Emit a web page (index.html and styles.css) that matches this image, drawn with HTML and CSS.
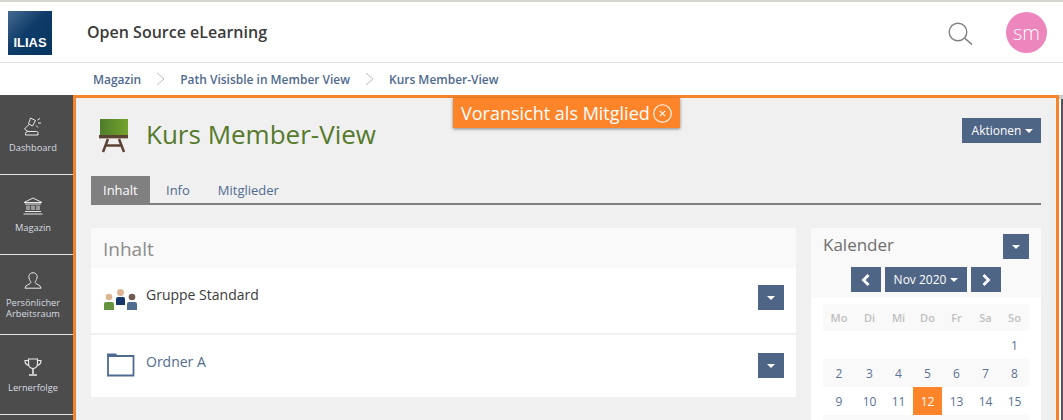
FILE: index.html
```html
<!DOCTYPE html>
<html lang="de">
<head>
<meta charset="utf-8">
<title>Kurs Member-View</title>
<link rel="stylesheet" href="styles.css">
</head>
<body>
<header class="topbar">
  <div class="logo"><span>ILIAS</span></div>
  <div class="site-title">Open Source eLearning</div>
  <svg class="search" width="25" height="23" viewBox="0 0 25 23" fill="none" stroke="#808080" stroke-width="1.4"><circle cx="10" cy="10" r="8.8"/><path d="M16.500 16 L24 22.500" stroke-width="1.600"/></svg>
  <div class="avatar">sm</div>
</header>
<nav class="crumbs">
  <a>Magazin</a>
  <svg class="crumb-sep" width="9" height="14" viewBox="0 0 9 14" fill="none" stroke="#bdbdbd"><path d="M1 1 L8 7 L1 13"/></svg>
  <a>Path Visisble in Member View</a>
  <svg class="crumb-sep" width="9" height="14" viewBox="0 0 9 14" fill="none" stroke="#bdbdbd"><path d="M1 1 L8 7 L1 13"/></svg>
  <a>Kurs Member-View</a>
</nav>
<div class="shell">
  <aside class="side">
    <div class="side-item">
      <svg width="20" height="19" viewBox="0 0 20 19" fill="none" stroke="#e8e8e8" stroke-width="1"><path d="M7.500 1 L12.500 3.500 L9.500 9 L5.500 7 Z"/><path d="M6 7.500 L1.500 12 L5 14.500"/><path d="M2.500 18 H15 V15.500 Q15 14.500 13.500 14.500 H5 Q2.500 14.500 2.500 16.500 Z"/><path d="M14.500 3 L17 1.500 M15 6 H18 M13 8.500 L15 10.500"/></svg>
      <span>Dashboard</span>
    </div>
    <div class="side-item">
      <svg width="20" height="18" viewBox="0 0 20 18" fill="none" stroke="#e8e8e8" stroke-width="1"><path d="M1 5.500 L10 1 L19 5.500 Z"/><path d="M2 7 H18 M2 14.500 H18 M0.500 17 H19.500"/><path d="M4 8.500 V13 M6 8.500 V13 M9 8.500 V13 M11 8.500 V13 M14 8.500 V13 M16 8.500 V13"/></svg>
      <span>Magazin</span>
    </div>
    <div class="side-item">
      <svg width="18" height="17" viewBox="0 0 18 17" fill="none" stroke="#e8e8e8" stroke-width="1"><path d="M9 0.800 C5.500 0.800 4.500 3.500 5 6 C5.500 8.500 6.800 9 6.800 10.500 C6.800 12.500 1 12.500 1 16.200 H17 C17 12.500 11.200 12.500 11.200 10.500 C11.200 9 12.500 8.500 13 6 C13.500 3.500 12.500 0.800 9 0.800 Z"/></svg>
      <span>Persönlicher Arbeitsraum</span>
    </div>
    <div class="side-item">
      <svg width="18" height="18" viewBox="0 0 18 18" fill="none" stroke="#e8e8e8" stroke-width="1.200"><path d="M4.500 1 H13.500 V5.500 C13.500 9 11 10.500 9 10.500 C7 10.500 4.500 9 4.500 5.500 Z"/><path d="M4.500 2.500 H1 C1 5.500 2.500 7 5 7.500 M13.500 2.500 H17 C17 5.500 15.500 7 13 7.500"/><path d="M9 10.500 V16 M5 17 H13" stroke-width="1.600"/></svg>
      <span>Lernerfolge</span>
    </div>
    <div class="side-item"></div>
  </aside>
  <main class="stage">
    <div class="preview-tag">Voransicht als Mitglied
      <svg width="19" height="19" viewBox="0 0 19 19" fill="none" stroke="#fff" stroke-width="1.100"><circle cx="9.500" cy="9.500" r="8.800"/><path d="M6.800 6.800 L12.200 12.200 M12.200 6.800 L6.800 12.200"/></svg>
    </div>
    <div class="course-head">
      <svg class="course-icon" width="30" height="34" viewBox="0 0 30 34"><defs><linearGradient id="board"><stop offset="0" stop-color="#4f7d2c"/><stop offset="1" stop-color="#74a32c"/></linearGradient></defs><rect x="1" y="0" width="28" height="16" fill="url(#board)"/><rect x="0" y="16" width="29" height="3" fill="#5b4234"/><rect x="0" y="19" width="29" height="1" fill="#b9b2a6"/><path d="M9 20 L4 33 M20 20 L25 33 M6.500 26.500 H22.500" stroke="#5b4234" stroke-width="2.500" fill="none"/></svg>
      <h1>Kurs Member-View</h1>
      <button class="btn actions">Aktionen <i class="caret"></i></button>
    </div>
    <div class="tabs">
      <a class="tab active">Inhalt</a>
      <a class="tab">Info</a>
      <a class="tab">Mitglieder</a>
    </div>
    <div class="columns">
      <section class="content">
        <h2 class="content-title">Inhalt</h2>
        <div class="row row-first">
          <svg class="row-icon" width="34" height="22" viewBox="0 0 34 22">
            <circle cx="5" cy="8" r="3.300" fill="#dcb592"/><path d="M0 21 V15 Q0 13 2 13 H8 Q10 13 10 15 V21 Z" fill="#64923d"/>
            <circle cx="16.500" cy="3.500" r="3.500" fill="#dcb592"/><path d="M12 16 V10 Q12 8 14 8 H19 Q21 8 21 10 V16 Z" fill="#14386b"/>
            <circle cx="28" cy="8" r="3.300" fill="#6e5a50"/><path d="M23 21 V15 Q23 13 25 13 H31 Q33 13 33 15 V21 Z" fill="#4f6b90"/>
          </svg>
          <span class="row-label dark">Gruppe Standard</span>
          <button class="btn drop"><i class="caret"></i></button>
        </div>
        <div class="row row-second">
          <svg class="row-icon" width="34" height="24" viewBox="0 0 34 24" fill="none"><path d="M4 3 H29.500 V22.500 H4 Z" stroke="#4f6b90" stroke-width="1.800"/><path d="M3 0.500 H12 L14 3.500 H3 Z" fill="#4f6b90"/></svg>
          <span class="row-label">Ordner A</span>
          <button class="btn drop"><i class="caret"></i></button>
        </div>
      </section>
      <aside class="calendar">
        <div class="cal-head">
          <div class="cal-title"><span>Kalender</span><button class="btn drop cal-menu"><i class="caret"></i></button></div>
          <div class="cal-nav">
            <button class="btn nav"><svg width="10" height="12" viewBox="0 0 10 12" fill="none" stroke="#fff" stroke-width="2.800"><path d="M7.500 1 L2.500 6 L7.500 11"/></svg></button>
            <button class="btn month">Nov 2020 <i class="caret"></i></button>
            <button class="btn nav"><svg width="10" height="12" viewBox="0 0 10 12" fill="none" stroke="#fff" stroke-width="2.800"><path d="M2.500 1 L7.500 6 L2.500 11"/></svg></button>
          </div>
        </div>
        <table class="cal-table">
          <thead><tr><th>Mo</th><th>Di</th><th>Mi</th><th>Do</th><th>Fr</th><th>Sa</th><th>So</th></tr></thead>
          <tbody>
            <tr><td></td><td></td><td></td><td></td><td></td><td></td><td>1</td></tr>
            <tr class="odd"><td>2</td><td>3</td><td>4</td><td>5</td><td>6</td><td>7</td><td>8</td></tr>
            <tr><td>9</td><td>10</td><td>11</td><td class="today">12</td><td>13</td><td>14</td><td>15</td></tr>
            <tr class="odd"><td></td><td></td><td></td><td></td><td></td><td></td><td></td></tr>
          </tbody>
        </table>
      </aside>
    </div>
  </main>
  <div class="edge"></div>
</div>
</body>
</html>
```

FILE: styles.css
```css
* { box-sizing: border-box; }
html, body { margin: 0; height: 420px; overflow: hidden; }
body { font-family: "Open Sans", "Noto Sans", sans-serif; background: #fff; color: #4f6b90; font-size: 13px; }

.topbar { height: 63px; border-top: 2px solid #d8d4d0; border-bottom: 1px solid #e0e0e0; display: flex; align-items: center; padding: 0 16px 0 8px; background: #fff; }
.logo { width: 44px; height: 44px; margin-top: 1px; background: linear-gradient(135deg, #466a91 0%, #0f3c68 45%, #053560 100%); color: #fff; font-family: "Liberation Sans", sans-serif; font-weight: 700; font-size: 13px; display: flex; align-items: flex-end; justify-content: center; padding-bottom: 5px; line-height: 14px; }
.site-title { margin-left: 35px; font-size: 16px; font-weight: 600; color: #3b3b3b; flex: 1; }
.search { margin-right: 33px; margin-top: 3px; }
.avatar { width: 41px; height: 41px; margin-top: 1px; border-radius: 50%; background: #ec86bd; color: #fff; font-size: 20px; font-weight: 300; display: flex; align-items: center; justify-content: center; }

.crumbs { height: 32px; padding-left: 93px; display: flex; align-items: center; gap: 14px; font-size: 11.970px; font-weight: 600; color: #4f6b90; }
.crumb-sep { margin: 0 1px; }

.shell { display: flex; height: 325px; overflow: hidden; }
.side { width: 73px; flex: none; background: #4c4c4c; }
.side-item { height: 80px; border-bottom: 1px solid #e6e6e6; display: flex; flex-direction: column; align-items: center; padding: 22px 7px 0 0; color: #d8dde4; font-size: 9.300px; line-height: 11px; text-align: center; gap: 6px; }
.side-item span { display: block; }
.side-item:nth-child(2) { gap: 7px; }
.side-item:nth-child(3) { padding-top: 17px; gap: 8px; }
.side-item:nth-child(3) span { width: 62px; }
.side-item:nth-child(4) { padding-top: 23px; gap: 6px; }

.stage { position: relative; width: 986px; flex: none; height: 340px; border: 3px solid #f6842a; border-bottom: 0; background: #f0f0f0; padding: 0 15px 0 14px; }
.preview-tag { position: absolute; top: 0; left: 377px; width: 227px; height: 30px; background: #fe842a; color: #fff; font-size: 18px; display: flex; align-items: center; padding-left: 8px; gap: 3px; white-space: nowrap; box-shadow: 0 1px 3px rgba(0,0,0,.45); }
.edge { flex: 1; background: #fff; border-top: 4px solid #cccccc; display: flex; justify-content: flex-end; }
.edge::after { content: ""; width: 2px; background: #555; }

.course-head { height: 78px; display: flex; align-items: flex-start; position: relative; }
.course-icon { margin: 21px 0 0 9px; }
h1 { margin: 0 0 0 17px; padding-top: 19px; font-size: 26px; line-height: 34px; font-weight: 400; color: #557a2c; flex: 1; }
.btn { border: 0; background: #4f6586; color: #fff; font-family: inherit; padding: 0; display: inline-flex; align-items: center; justify-content: center; }
.actions { width: 79px; height: 25px; font-size: 12px; gap: 4px; margin-top: 20px; padding-left: 2px; }
.caret { display: inline-block; width: 0; height: 0; border-top: 4px solid #fff; border-left: 4px solid transparent; border-right: 4px solid transparent; }

.tabs { display: flex; height: 29px; border-bottom: 2px solid #808080; margin-left: 1px; margin-bottom: 23px; font-size: 13px; }
.tab { padding: 0 13px; line-height: 29px; margin-left: 2px; height: 27px; }
.tab.active { background: #808080; color: #fff; margin-left: 0; width: 59px; padding: 0 12px; }
.tab.active + .tab { margin-left: 3px; }

.columns { display: flex; align-items: flex-start; gap: 15px; margin-left: 1px; }
.content { width: 705px; flex: none; }
.content-title { margin: 0; height: 40px; padding-left: 12px; background: #f9f9f9; font-weight: 400; font-size: 19px; line-height: 42px; color: #8c8c8c; }
.row { background: #fff; display: flex; align-items: flex-start; position: relative; padding-left: 13px; }
.row-first { height: 65px; margin-bottom: 2px; padding-top: 21px; }
.row-second { height: 62px; padding-top: 18px; }
.row-label { font-size: 14px; line-height: 19px; margin-left: 8px; flex: 1; }
.row-first .row-label { margin-top: -4px; }
.row-second .row-label { margin-top: -1px; }
.row-label.dark { color: #3b3b3b; }
.drop { width: 26px; height: 25px; margin-right: 12px; }
.row-first .drop { margin-top: -4px; }

.calendar { width: 230px; flex: none; background: #fff; }
.cal-head { background: #f9f9f9; height: 70px; padding: 6px 12px 0; }
.cal-title { display: flex; justify-content: space-between; align-items: flex-start; font-size: 17px; color: #6f6f6f; line-height: 21px; }
.cal-menu { margin: 0; }
.cal-nav { display: flex; justify-content: center; gap: 4px; margin-top: 8px; }
.nav { width: 30px; height: 25px; }
.month { width: 82px; height: 25px; font-size: 12px; gap: 4px; }

.cal-table { border-collapse: collapse; table-layout: fixed; width: 206px; margin: 6px 12px 0; font-size: 12px; }
.cal-table th { height: 27px; width: 29px; background: #f9f9f9; color: #bfbfbf; font-weight: 600; font-size: 11px; padding: 0; }
.cal-table th:first-child { width: 32px; }
.cal-table td { height: 28px; padding: 0; text-align: center; color: #5a7396; }
.cal-table .odd td { background: #f9f9f9; }
.cal-table .today { background: #fe842a; color: #fff; }
```
